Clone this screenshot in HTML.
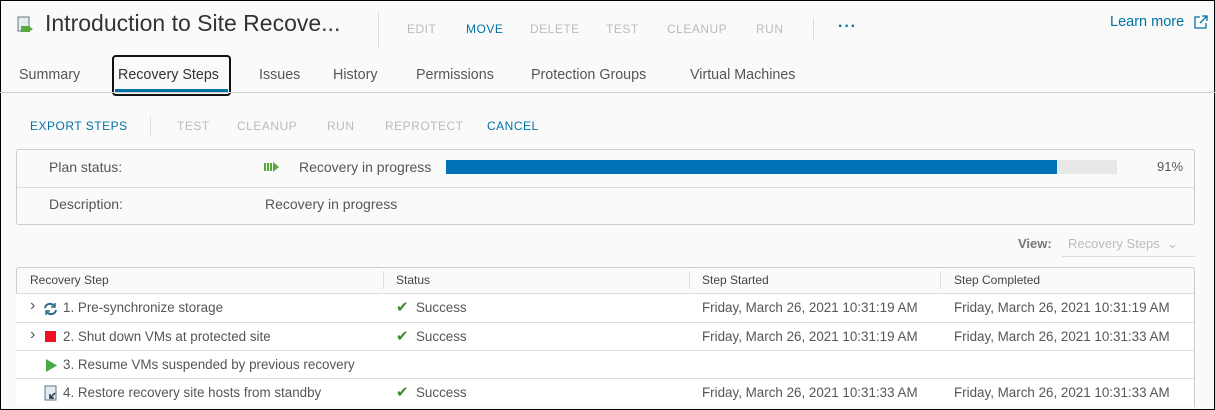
<!DOCTYPE html>
<html><head><style>
*{margin:0;padding:0;box-sizing:border-box}
body{width:1215px;height:405px;overflow:hidden;background:#fafafa;font-family:"Liberation Sans",sans-serif;color:#565656;position:relative}
.a{position:absolute;white-space:nowrap}
.act{font-size:12px;letter-spacing:.5px;color:#bbb}
.blue{color:#0072a3}
.tab{font-size:14.3px;color:#565656;top:67px}
.row{position:absolute;left:16px;width:1178px;border-top:1px solid #ddd;height:29px;font-size:13.4px;background:#fff}
.row span{position:absolute;top:6px}
.ck{font-size:15px;top:4px!important}
</style></head><body>
<div class="a" style="left:0;top:0;width:1215px;height:410px;border:1px solid #000"></div>
<svg class="a" style="left:17px;top:16px" width="16" height="18" viewBox="0 0 16 18"><rect x="1" y="1" width="11" height="14" fill="#e8eef0" stroke="#5a7a86"/><rect x="4" y="10" width="9" height="6" fill="#5aa83a"/><path d="M13 11l3 2-3 2z" fill="#5aa83a"/></svg>
<div class="a" style="left:45px;top:10px;font-size:23px;color:#333">Introduction to Site Recove...</div>
<div class="a" style="left:378px;top:12px;width:1px;height:36px;background:#ddd"></div>
<div class="a act" style="left:407px;top:22px">EDIT</div>
<div class="a act blue" style="left:466px;top:22px">MOVE</div>
<div class="a act" style="left:530px;top:22px">DELETE</div>
<div class="a act" style="left:606px;top:22px">TEST</div>
<div class="a act" style="left:667px;top:22px">CLEANUP</div>
<div class="a act" style="left:756px;top:22px">RUN</div>
<div class="a" style="left:813px;top:18px;width:1px;height:22px;background:#ddd"></div>
<div class="a blue" style="left:838px;top:18px;font-size:16px;font-weight:bold;letter-spacing:1px">···</div>
<div class="a blue" style="left:1110px;top:14px;font-size:14.5px">Learn more</div>
<svg class="a" style="left:1194px;top:15px" width="14" height="14" viewBox="0 0 14 14" fill="none" stroke="#0072a3" stroke-width="1.3"><path d="M6 2H1v11h11V8M8 1h5v5M13 1L6 8"/></svg>
<div class="a tab" style="left:19px">Summary</div>
<div class="a" style="left:112px;top:55px;width:119px;height:41px;border:2px solid #111;border-radius:4px"></div>
<div class="a" style="left:115px;top:89px;width:113px;height:3px;background:#0072a3"></div>
<div class="a tab" style="left:118px;color:#333">Recovery Steps</div>
<div class="a tab" style="left:259px">Issues</div>
<div class="a tab" style="left:333px">History</div>
<div class="a tab" style="left:416px">Permissions</div>
<div class="a tab" style="left:531px">Protection Groups</div>
<div class="a tab" style="left:690px">Virtual Machines</div>
<div class="a" style="left:0;top:92px;width:1215px;height:1px;background:#ccc"></div>
<div class="a act blue" style="left:30px;top:119px">EXPORT STEPS</div>
<div class="a" style="left:150px;top:116px;width:1px;height:20px;background:#ddd"></div>
<div class="a act" style="left:177px;top:119px">TEST</div>
<div class="a act" style="left:237px;top:119px">CLEANUP</div>
<div class="a act" style="left:327px;top:119px">RUN</div>
<div class="a act" style="left:385px;top:119px">REPROTECT</div>
<div class="a act blue" style="left:487px;top:119px">CANCEL</div>
<div class="a" style="left:16px;top:149px;width:1179px;height:76px;border:1px solid #ccc;border-radius:3px"></div>
<div class="a" style="left:17px;top:187px;width:1177px;height:1px;background:#ddd"></div>
<div class="a" style="left:49px;top:159px;font-size:14px">Plan status:</div>
<svg class="a" style="left:264px;top:162px" width="16" height="10" viewBox="0 0 16 10"><path d="M0 1h2v8H0zM3 1h2v8H3zM6 1h2v8H6zM9 0l6 5-6 5z" fill="#5aa83a"/></svg>
<div class="a" style="left:299px;top:159px;font-size:14px">Recovery in progress</div>
<div class="a" style="left:446px;top:160px;width:671px;height:14px;background:#e8e8e8"></div>
<div class="a" style="left:446px;top:160px;width:611px;height:14px;background:#0072b5"></div>
<div class="a" style="left:1157px;top:159px;font-size:13px">91%</div>
<div class="a" style="left:49px;top:196px;font-size:14px">Description:</div>
<div class="a" style="left:265px;top:196px;font-size:14px">Recovery in progress</div>
<div class="a" style="left:1018px;top:236px;font-size:13px;font-weight:bold;color:#777">View:</div>
<div class="a" style="left:1068px;top:236px;font-size:13px;color:#bbb">Recovery Steps &nbsp;⌄</div>
<div class="a" style="left:1062px;top:256px;width:133px;height:1px;background:#ddd"></div>
<div class="a" style="left:16px;top:267px;width:1179px;height:140px;border:1px solid #ccc;border-radius:3px 3px 0 0;background:#fafafa"></div>
<div class="a" style="left:30px;top:273px;font-size:12px;color:#444">Recovery Step</div>
<div class="a" style="left:396px;top:273px;font-size:12px;color:#444">Status</div>
<div class="a" style="left:702px;top:273px;font-size:12px;color:#444">Step Started</div>
<div class="a" style="left:954px;top:273px;font-size:12px;color:#444">Step Completed</div>
<div class="a" style="left:383px;top:271px;width:1px;height:18px;background:#ddd"></div>
<div class="a" style="left:689px;top:271px;width:1px;height:18px;background:#ddd"></div>
<div class="a" style="left:940px;top:271px;width:1px;height:18px;background:#ddd"></div>

<div class="row" style="top:293px"><span style="left:14px;top:3px;font-size:16px">›</span>
<svg class="a" style="left:27px;top:8px" width="15" height="14" viewBox="0 0 15 14" fill="none" stroke="#2a6c8c" stroke-width="2"><path d="M2 6a5 5 0 0 1 9-2M13 8a5 5 0 0 1-9 2"/><path d="M12 1v4H8M3 13V9h4" stroke-width="1.5"/></svg>
<span style="left:47px">1. Pre-synchronize storage</span><span class="ck" style="left:380px;color:#3c8d25">✔</span><span style="left:400px">Success</span><span style="left:686px">Friday, March 26, 2021 10:31:19 AM</span><span style="left:938px">Friday, March 26, 2021 10:31:19 AM</span></div>
<div class="row" style="top:322px"><span style="left:14px;top:3px;font-size:16px">›</span>
<div class="a" style="left:29px;top:8px;width:11px;height:11px;background:#e12"></div>
<span style="left:47px">2. Shut down VMs at protected site</span><span class="ck" style="left:380px;color:#3c8d25">✔</span><span style="left:400px">Success</span><span style="left:686px">Friday, March 26, 2021 10:31:19 AM</span><span style="left:938px">Friday, March 26, 2021 10:31:33 AM</span></div>
<div class="row" style="top:350px">
<svg class="a" style="left:30px;top:8px" width="11" height="13"><path d="M0 0l11 6.5L0 13z" fill="#4a4"/></svg>
<span style="left:47px">3. Resume VMs suspended by previous recovery</span></div>
<div class="row" style="top:378px">
<svg class="a" style="left:28px;top:6px" width="14" height="16" viewBox="0 0 14 16"><rect x="1" y="1" width="11" height="14" fill="#e4ecf0" stroke="#5a7a86"/><path d="M11 8L6 13M6 9v4h4" stroke="#234" stroke-width="1.5" fill="none"/></svg>
<span style="left:47px">4. Restore recovery site hosts from standby</span><span class="ck" style="left:380px;color:#3c8d25">✔</span><span style="left:400px">Success</span><span style="left:686px">Friday, March 26, 2021 10:31:33 AM</span><span style="left:938px">Friday, March 26, 2021 10:31:33 AM</span></div>
</body></html>
